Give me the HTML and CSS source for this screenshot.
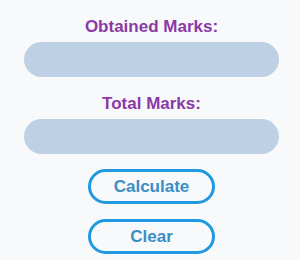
FILE: index.html
```html
<!doctype html>
<html lang="en">
<head>
	<meta charset="UTF-8" />
	<title>Marks</title>
	<link rel="stylesheet" href="styles.css">
</head>
<body>
	<section class="form">
		<label for="obtained">Obtained Marks:</label>
		<input type="text" id="obtained" class="field" />
		<label for="total">Total Marks:</label>
		<input type="text" id="total" class="field" />
		<button class="btn btn-calc">Calculate</button>
		<button class="btn">Clear</button>
	</section>
</body>
</html>
```

FILE: styles.css
```css
*{
	margin: 0;
	padding: 0;
	box-sizing: border-box;
}
body{
	background: #f8f9fa;
	font-family: "Liberation Sans", Arial, sans-serif;
}
.form{
	display: flex;
	flex-direction: column;
	align-items: center;
	padding: 17px 21px 0 24px;
}
label{
	font-size: 17px;
	font-weight: bold;
	line-height: 20px;
	color: #8b3aa6;
}
.field{
	width: 100%;
	height: 35px;
	margin: 5px 0 17px;
	border: none;
	border-radius: 18px;
	background: #bdd0e4;
	outline: none;
}
.btn{
	width: 127px;
	height: 35px;
	border: 3px solid #1f9ae0;
	border-radius: 18px;
	background: #f8f9fa;
	color: #3a8ec6;
	font-family: "Liberation Sans", Arial, sans-serif;
	font-size: 17px;
	font-weight: bold;
}
.btn-calc{
	margin: -2px 0 15px;
}
```
